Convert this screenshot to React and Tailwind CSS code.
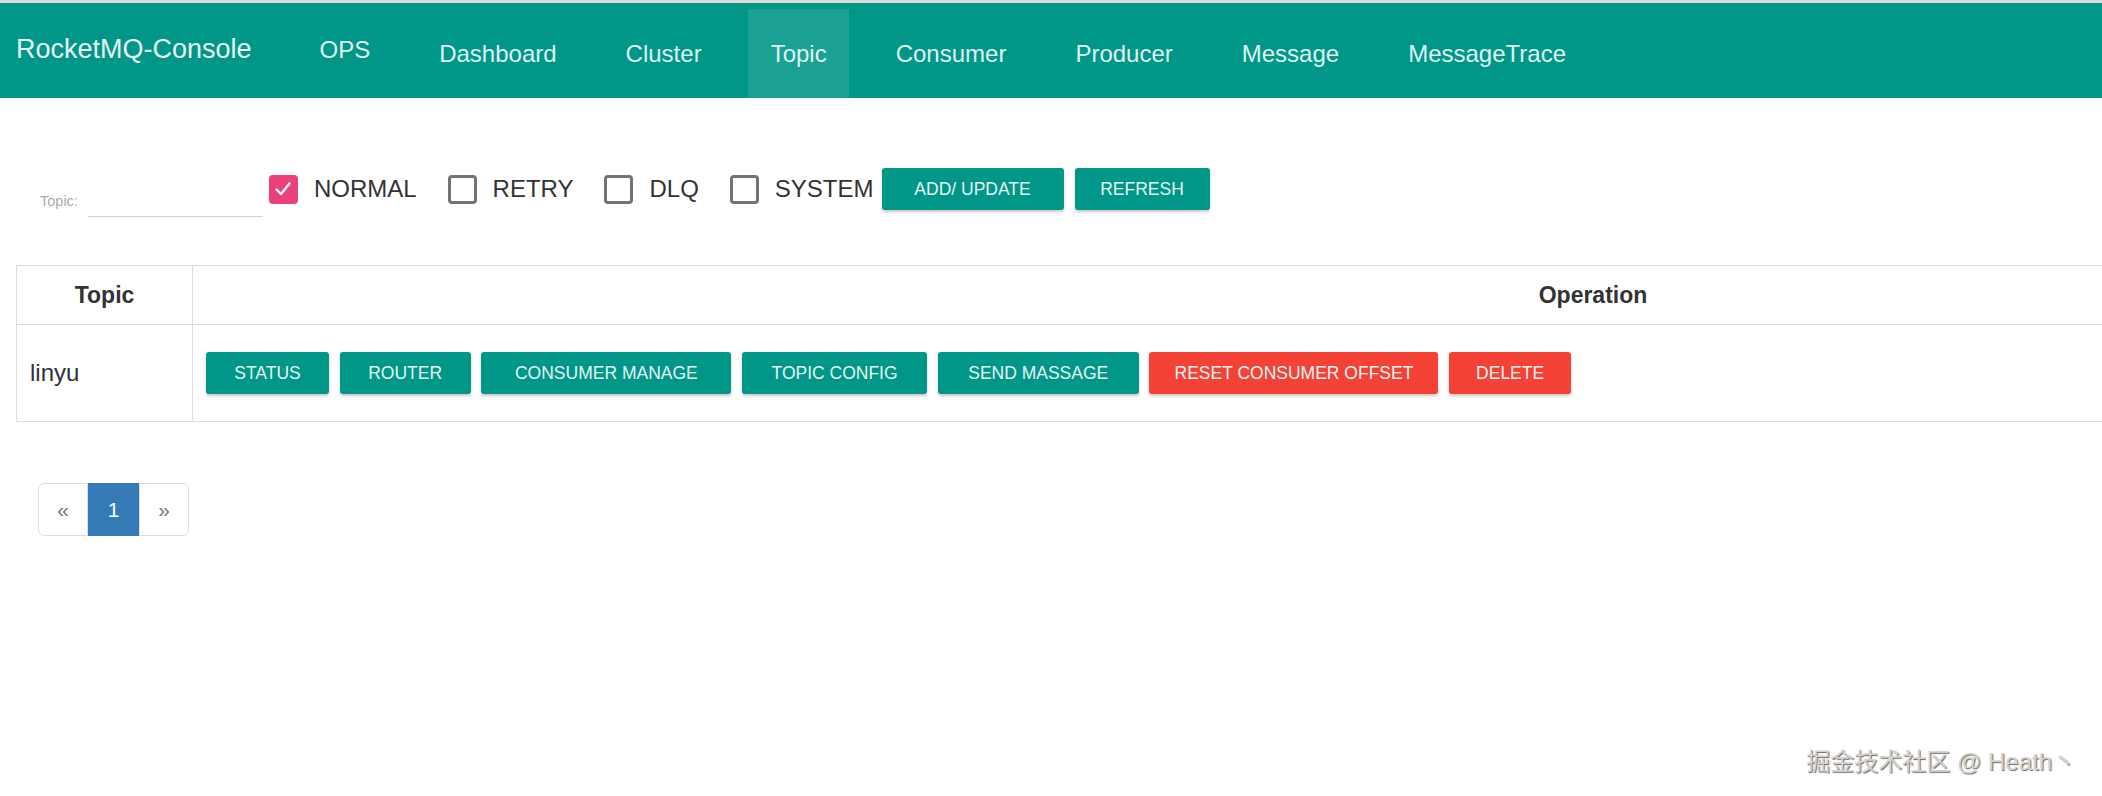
import React from "react";

const navItems = ["OPS", "Dashboard", "Cluster", "Topic", "Consumer", "Producer", "Message", "MessageTrace"];

const types = [
  { label: "NORMAL", checked: true },
  { label: "RETRY", checked: false },
  { label: "DLQ", checked: false },
  { label: "SYSTEM", checked: false, last: true },
];

const actions = [
  { label: "STATUS", w: "w-[123px]", red: false },
  { label: "ROUTER", w: "w-[131px]", red: false },
  { label: "CONSUMER MANAGE", w: "w-[250px]", red: false },
  { label: "TOPIC CONFIG", w: "w-[185px]", red: false },
  { label: "SEND MASSAGE", w: "w-[201px]", red: false },
  { label: "RESET CONSUMER OFFSET", w: "w-[289px]", red: true },
  { label: "DELETE", w: "w-[122px]", red: true },
];

function Checkbox({ label, checked, last }) {
  return (
    <label className={"flex items-center " + (last ? "mr-[8px]" : "mr-[31px]")}>
      {checked ? (
        <span className="w-[29px] h-[29px] rounded-[4px] bg-[#ec407a] flex items-center justify-center">
          <svg width="20" height="20" viewBox="0 0 20 20" fill="none">
            <polyline points="3.5,10.5 8,15 16.5,4.5" stroke="white" strokeWidth="2.4" strokeLinecap="round" strokeLinejoin="round" />
          </svg>
        </span>
      ) : (
        <span className="w-[29px] h-[29px] rounded-[4px] border-[3px] border-[#737373] bg-white" />
      )}
      <span className="ml-[16px] text-[24px] text-[#333]">{label}</span>
    </label>
  );
}

function Btn({ children, className }) {
  return (
    <button
      className={
        "h-[42px] rounded-[3px] text-[#e3f4f2] text-[17.5px] flex items-center justify-center shadow-[0_2px_3px_rgba(0,0,0,0.22)] " +
        className
      }
    >
      {children}
    </button>
  );
}

export default function App() {
  return (
    <div className="relative w-[2102px] h-[796px] overflow-hidden bg-white font-['Liberation_Sans',Arial,sans-serif]">
      <div className="h-[3px] bg-[#dcdcdc]" />

      {/* navbar */}
      <nav className="h-[95px] bg-[#009688] flex items-stretch gap-[24px] text-[#def3f0]">
        <div className="w-[273px] pl-[16px] flex items-center pb-[2px] text-[27px] text-[#e6f7f5]">RocketMQ-Console</div>
        {navItems.map((n) => (
          <div
            key={n}
            className={
              "px-[22.5px] flex items-center text-[24px] " +
              (n === "OPS" ? "pb-[2px]" : "mt-[6px]") +
              (n === "Topic" ? " bg-[#1aa194]" : "")
            }
          >
            {n}
          </div>
        ))}
      </nav>

      {/* search row */}
      <div className="mt-[70px] pl-[40px] flex items-start h-[49px]">
        <div className="self-end flex items-end">
          <span className="text-[14.5px] text-[#aaa] mb-[4px]">Topic:</span>
          <div className="ml-[10px] w-[175px] h-[30px] border-b border-[#d2d2d2]" />
        </div>
        <div className="ml-[6px] h-[42px] flex items-center">
          {types.map((t) => (
            <Checkbox key={t.label} {...t} />
          ))}
          <Btn className="w-[182px] bg-[#009688]">ADD/ UPDATE</Btn>
          <Btn className="ml-[11px] w-[135px] bg-[#009688]">REFRESH</Btn>
        </div>
      </div>

      {/* table */}
      <table className="mt-[48px] ml-[16px] w-[2978px] border-collapse text-[#333]">
        <thead>
          <tr className="h-[59px]">
            <th className="w-[176px] border border-[#dddddd] text-[23px] font-bold">Topic</th>
            <th className="border border-[#dddddd] text-[23px] font-bold">Operation</th>
          </tr>
        </thead>
        <tbody>
          <tr className="h-[97px]">
            <td className="border border-[#dddddd] pl-[13px] text-[24px]">linyu</td>
            <td className="border border-[#dddddd] pl-[13px]">
              <div className="flex gap-[10.7px]">
                {actions.map((a) => (
                  <Btn key={a.label} className={a.w + " " + (a.red ? "bg-[#f44336]" : "bg-[#009688]")}>
                    {a.label}
                  </Btn>
                ))}
              </div>
            </td>
          </tr>
        </tbody>
      </table>

      {/* pagination */}
      <div className="mt-[61px] ml-[38px] flex">
        <span className="w-[50px] h-[53px] flex items-center justify-center border border-[#dddddd] rounded-l-[6px] text-[21px] text-[#777]">«</span>
        <span className="w-[51px] h-[53px] flex items-center justify-center bg-[#337ab7] border border-[#337ab7] text-[21px] text-white">1</span>
        <span className="w-[50px] h-[53px] flex items-center justify-center border border-[#dddddd] rounded-r-[6px] text-[21px] text-[#777]">»</span>
      </div>

      {/* watermark */}
      <div className="absolute right-[26px] top-[744px] text-[24px] text-[#d4d4d4] [text-shadow:1px_1px_1px_#666] font-['Liberation_Sans','Noto_Sans_CJK_SC',sans-serif]">
        掘金技术社区 @ Heath丶
      </div>
    </div>
  );
}
